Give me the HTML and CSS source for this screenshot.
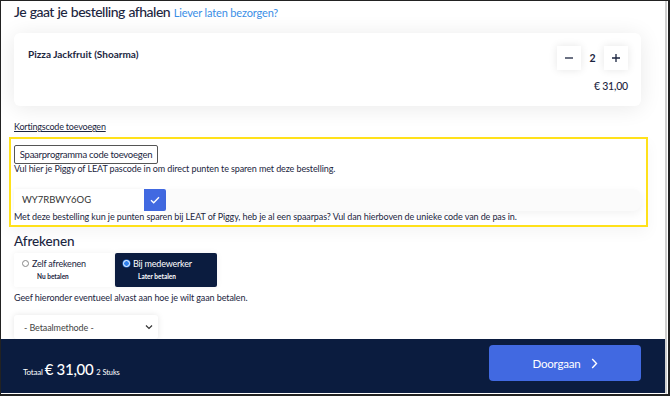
FILE: index.html
```html
<!DOCTYPE html>
<html lang="nl">
<head>
<meta charset="utf-8">
<title>Bestelling</title>
<link rel="stylesheet" href="styles.css">
</head>
<body>
<div class="frame">
  <div class="screen">
    <main class="content">
      <h1 class="title">Je gaat je bestelling afhalen <a class="title-link" href="#">Liever laten bezorgen?</a></h1>

      <section class="card">
        <div class="item-name">Pizza Jackfruit (Shoarma)</div>
        <div class="item-side">
          <div class="qty">
            <button class="qty-btn" type="button">
              <svg width="10" height="10" viewBox="0 0 10 10"><path d="M1 5h8" stroke="#1b2540" stroke-width="1.3"/></svg>
            </button>
            <span class="qty-num">2</span>
            <button class="qty-btn" type="button">
              <svg width="10" height="10" viewBox="0 0 10 10"><path d="M1 5h8M5 1v8" stroke="#1b2540" stroke-width="1.3"/></svg>
            </button>
          </div>
          <div class="item-price">€ 31,00</div>
        </div>
      </section>

      <a class="discount" href="#">Kortingscode toevoegen</a>

      <section class="loyalty">
        <button class="outline-btn" type="button">Spaarprogramma code toevoegen</button>
        <p class="small-text">Vul hier je Piggy of LEAT pascode in om direct punten te sparen met deze bestelling.</p>
        <div class="code-row">
          <div class="code-input">WY7RBWY6OG</div>
          <button class="check-btn" type="button">
            <svg width="10" height="8" viewBox="0 0 10 8"><path d="M1 4.2l2.7 2.6L9 1.2" fill="none" stroke="#fff" stroke-width="1.3"/></svg>
          </button>
          <div class="code-rest"></div>
        </div>
        <p class="small-text note">Met deze bestelling kun je punten sparen bij LEAT of Piggy, heb je al een spaarpas? Vul dan hierboven de unieke code van de pas in.</p>
      </section>

      <h2 class="section-title">Afrekenen</h2>
      <div class="pay-options">
        <label class="pay-option">
          <span class="pay-main"><span class="radio"></span>Zelf afrekenen</span>
          <span class="pay-sub">Nu betalen</span>
        </label>
        <label class="pay-option active">
          <span class="pay-main"><span class="radio checked"></span>Bij medewerker</span>
          <span class="pay-sub">Later betalen</span>
        </label>
      </div>
      <p class="hint">Geef hieronder eventueel alvast aan hoe je wilt gaan betalen.</p>
      <div class="select">
        <span>- Betaalmethode -</span>
        <svg width="8" height="6" viewBox="0 0 8 6"><path d="M1 1.5l3 3 3-3" fill="none" stroke="#333" stroke-width="1.2"/></svg>
      </div>
    </main>

    <footer class="footer">
      <div class="total">
        <span class="total-label">Totaal</span>
        <span class="total-amount">€ 31,00</span>
        <span class="total-count">2 Stuks</span>
      </div>
      <button class="next-btn" type="button">Doorgaan
        <svg width="7" height="11" viewBox="0 0 7 11"><path d="M1.2 1l4.3 4.5-4.3 4.5" fill="none" stroke="#fff" stroke-width="1.4"/></svg>
      </button>
    </footer>
  </div>
</div>
</body>
</html>
```
FILE: styles.css
```css
* { box-sizing: border-box; }
html, body { margin: 0; padding: 0; }
body {
  font-family: "Lato", "Noto Sans", sans-serif;
  color: #1b2540;
  background: #fff;
}
.frame {
  width: 670px;
  height: 396px;
  border: 1px solid #222;
  border-right: 2px solid #222;
  border-bottom: 2px solid #222;
  background: #fff;
}
.screen {
  height: 100%;
  display: flex;
  flex-direction: column;
  border-right: 2px solid #cfcfcf;
  border-bottom: 1px solid #fff;
  margin-right: 1px;
}
.content {
  flex: 1;
  overflow: hidden;
  padding: 0 24px 0 13px;
  display: flex;
  flex-direction: column;
  align-items: stretch;
}
.title {
  margin: 1px 0 0;
  font-size: 14px;
  font-weight: 500;
  line-height: 20px;
  letter-spacing: -0.5px;
  word-spacing: 0.5px;
  color: #1b2540;
}
.title-link {
  font-size: 11px;
  font-weight: 400;
  letter-spacing: -0.15px;
  word-spacing: 0;
  color: #3a8ee6;
  text-decoration: none;
}
.card {
  margin-top: 10px;
  height: 75px;
  background: #fff;
  border-radius: 6px;
  box-shadow: 0 2px 22px rgba(0, 0, 0, 0.09);
  padding: 13px 13px 0 14px;
  display: flex;
  justify-content: space-between;
}
.item-name {
  font-size: 10px;
  font-weight: 700;
  margin-top: 2px;
}
.item-side {
  display: flex;
  flex-direction: column;
  align-items: flex-end;
}
.qty {
  display: flex;
  align-items: center;
}
.qty-btn {
  width: 24px;
  height: 24px;
  border: 0;
  padding: 0;
  background: #fff;
  box-shadow: 0 0 8px rgba(0, 0, 0, 0.1);
  display: flex;
  align-items: center;
  justify-content: center;
}
.qty-num {
  width: 23px;
  text-align: center;
  font-size: 10.5px;
  font-weight: 700;
}
.item-price {
  margin-top: 10px;
  font-size: 10.5px;
  font-weight: 500;
  letter-spacing: -0.2px;
}
.discount {
  margin-top: 15px;
  align-self: flex-start;
  font-size: 9px;
  line-height: 12px;
  letter-spacing: -0.2px;
  color: #1b2540;
  text-decoration: underline;
}
.loyalty {
  margin: 4px -7px 0 -5px;
  border: 2px solid #ffe11a;
  padding: 6px 5px 3px 3px;
  background: #fff;
  box-shadow: 0 6px 14px rgba(0, 0, 0, 0.04);
  display: flex;
  flex-direction: column;
  align-items: flex-start;
}
.outline-btn {
  width: 144px;
  height: 19px;
  padding: 0;
  border: 1px solid #555;
  border-radius: 2px;
  background: #fff;
  font-family: inherit;
  font-size: 9.5px;
  letter-spacing: -0.25px;
  color: #1b2540;
}
.small-text {
  margin: 0;
  font-size: 9px;
  line-height: 10px;
  letter-spacing: -0.1px;
}
.code-row {
  margin-top: 15px;
  align-self: stretch;
  display: flex;
  height: 22px;
}
.code-input {
  width: 130px;
  background: #fff;
  padding-left: 8px;
  font-size: 9.5px;
  line-height: 22px;
  color: #333;
  box-shadow: 0 0 4px rgba(0, 0, 0, 0.06);
}
.check-btn {
  width: 22px;
  height: 22px;
  border: 0;
  padding: 0;
  background: #4169e1;
  border-radius: 0 2px 2px 0;
  display: flex;
  align-items: center;
  justify-content: center;
}
.code-rest {
  flex: 1;
  background: #fbfbfb;
  border-radius: 0 8px 8px 0;
  box-shadow: 0 3px 8px rgba(0, 0, 0, 0.05);
}
.note {
  margin-top: 1px;
  letter-spacing: -0.1px;
}
.section-title {
  margin: 5px 0 0;
  font-size: 13.5px;
  font-weight: 500;
  line-height: 18px;
  letter-spacing: -0.1px;
}
.pay-options {
  margin-top: 3px;
  display: flex;
  gap: 1px;
}
.pay-option {
  width: 100px;
  height: 34px;
  padding: 4px 0 0 8px;
  background: #fff;
  border-radius: 2px;
  box-shadow: 0 0 6px rgba(0, 0, 0, 0.06);
  display: flex;
  flex-direction: column;
}
.pay-option.active {
  width: 102px;
  background: #0b1c3f;
  color: #fff;
}
.pay-main {
  display: flex;
  align-items: center;
  font-size: 9px;
  letter-spacing: -0.2px;
  line-height: 13px;
}
.radio {
  width: 7px;
  height: 7px;
  border-radius: 50%;
  border: 1px solid #888;
  background: #fff;
  margin-right: 3px;
}
.radio.checked {
  border: 1.5px solid #fff;
  background: #2f80ed;
  box-shadow: 0 0 0 0.5px #2f80ed;
}
.pay-sub {
  margin: 3px 0 0 15px;
  font-size: 6.5px;
  font-weight: 700;
}
.hint {
  margin: 5px 0 0;
  font-size: 9px;
  line-height: 12px;
  letter-spacing: -0.1px;
}
.select {
  margin-top: 11px;
  width: 144px;
  height: 24px;
  flex-shrink: 0;
  background: #fff;
  border-radius: 3px;
  box-shadow: 0 0 6px rgba(0, 0, 0, 0.1);
  padding: 0 5px 0 10px;
  display: flex;
  align-items: center;
  justify-content: space-between;
  font-size: 9px;
  letter-spacing: -0.1px;
  color: #444;
}
.footer {
  height: 54px;
  flex-shrink: 0;
  background: #0b1c3f;
  color: #fff;
  display: flex;
  align-items: center;
  justify-content: space-between;
  padding: 0 24px 0 22px;
}
.total {
  display: flex;
  align-items: baseline;
  gap: 2px;
  margin-top: 5px;
}
.total-label { font-size: 8px; letter-spacing: -0.2px; }
.total-amount { font-size: 15px; font-weight: 500; letter-spacing: -0.3px; margin-right: 1px; }
.total-count { font-size: 7.5px; letter-spacing: -0.1px; }
.next-btn {
  width: 152px;
  height: 36px;
  margin-top: -6px;
  border: 0;
  border-radius: 4px;
  background: #4169e1;
  color: #fff;
  font-family: inherit;
  font-size: 11.5px;
  letter-spacing: -0.2px;
  display: flex;
  align-items: center;
  justify-content: center;
  gap: 10px;
  padding-left: 6px;
}
```
